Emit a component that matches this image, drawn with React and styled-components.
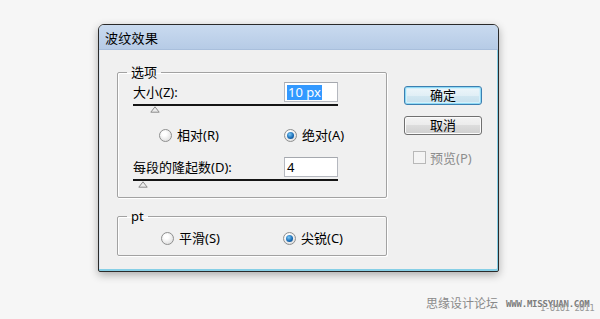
import React from "react";
import styled, { createGlobalStyle, css } from "styled-components";

const Global = createGlobalStyle`
  html, body {
    margin: 0;
    padding: 0;
    background: #f6f6f6;
  }
  body {
    font-family: "Noto Sans", "Noto Sans CJK SC", sans-serif;
    font-size: 13px;
    color: #000;
  }
`;

const Page = styled.div`
  width: 600px;
  height: 319px;
  box-sizing: border-box;
  padding: 24px 0 0 98px;
  display: flex;
  flex-direction: column;
  overflow: hidden;
`;

const Dialog = styled.div`
  width: 401px;
  height: 248px;
  box-sizing: border-box;
  border: 1px solid #2a2a2a;
  border-radius: 6px 6px 2px 2px;
  background: #f0f0f0;
  box-shadow: 0 3px 9px rgba(0, 0, 0, 0.3), inset -1px -2px 0 #86cfe6,
    inset 1px 0 0 #dce6f1;
  display: flex;
  flex-direction: column;
  overflow: hidden;
`;

const TitleBar = styled.div`
  height: 24px;
  flex: none;
  display: flex;
  align-items: center;
  padding-left: 6px;
  background: linear-gradient(180deg, #c9daef 0%, #b6cbe6 100%);
  border-bottom: 1px solid #a9bfdc;
  font-size: 13px;
  letter-spacing: 0.3px;
`;

const Body = styled.div`
  flex: 1;
  display: flex;
  padding: 15px 0 0 18px;
  gap: 17px;
`;

const LeftCol = styled.div`
  width: 270px;
  display: flex;
  flex-direction: column;
  gap: 11px;
`;

const Group = styled.fieldset`
  margin: 0;
  padding: 3px 0 ${(p) => p.$pb}px 15px;
  border: 1px solid #a2a2a2;
  border-radius: 2px;
  box-shadow: inset 1px 1px 0 #fff, 1px 1px 0 #fff;
  min-width: 0;
`;

const Legend = styled.legend`
  padding: 0 4px;
  margin-left: -6px;
  font-size: 13px;
  line-height: 14px;
`;

const FieldRow = styled.div`
  width: 205px;
  height: 20px;
  display: flex;
  align-items: center;
  justify-content: space-between;
`;

const Label = styled.span`
  line-height: 14px;
`;

const Input = styled.div`
  width: 54px;
  height: 20px;
  box-sizing: border-box;
  border: 1px solid #b5b8bf;
  border-top-color: #a5a8ae;
  background: #fff;
  display: flex;
  align-items: center;
  padding-left: 2px;
  font-size: 13px;
`;

const Selected = styled.span`
  background: #3399ff;
  color: #fff;
  line-height: 15px;
  padding: 0 1px;
`;

const Slider = styled.div`
  position: relative;
  width: 205px;
  height: 8px;
  margin-top: 2px;
  &::before {
    content: "";
    display: block;
    height: 2px;
    background: #151515;
  }
`;

const Thumb = styled.svg`
  position: absolute;
  top: 2px;
  left: ${(p) => p.$at}px;
`;

const RadioRow = styled.div`
  display: grid;
  grid-template-columns: ${(p) => p.$cols};
  height: 16px;
  align-items: center;
  margin-top: ${(p) => p.$mt}px;
`;

const Option = styled.label`
  display: flex;
  align-items: center;
  gap: 5px;
  line-height: 14px;
`;

const RadioDot = styled.span`
  position: relative;
  width: 11px;
  height: 11px;
  border-radius: 50%;
  border: 1px solid #8e8f8f;
  background: radial-gradient(circle at 40% 35%, #ffffff 20%, #d4d4d4 100%);
  ${(p) =>
    p.$checked &&
    css`
      &::after {
        content: "";
        position: absolute;
        inset: 2px;
        border-radius: 50%;
        background: radial-gradient(
          circle at 40% 35%,
          #7cc8f5 0%,
          #1c6fb8 55%,
          #0b3f78 100%
        );
      }
    `}
`;

const SecondRow = styled(FieldRow)`
  margin-top: 14px;
`;

const RightCol = styled.div`
  display: flex;
  flex-direction: column;
  padding-top: 21px;
  gap: 11px;
`;

const Button = styled.button`
  width: 78px;
  height: 19px;
  box-sizing: border-box;
  padding: 0;
  border-radius: 3px;
  font-family: inherit;
  font-size: 13px;
  line-height: 15px;
  color: #000;
  border: 1px solid #707070;
  background: linear-gradient(
    180deg,
    #f3f3f3 0%,
    #ebebeb 50%,
    #dcdcdc 50%,
    #cfcfcf 100%
  );
  box-shadow: inset 0 0 0 1px #fbfbfb;
  ${(p) =>
    p.$primary &&
    css`
      border-color: #3c7fb1;
      background: linear-gradient(
        180deg,
        #eef6fa 0%,
        #e1eff6 50%,
        #d2e7f1 50%,
        #c6dfec 100%
      );
      box-shadow: inset 0 0 0 1px #8fdaf5, inset 0 0 0 2px #d4f0fb;
    `}
`;

const CheckRow = styled.label`
  display: flex;
  align-items: center;
  gap: 4px;
  height: 16px;
  margin-top: 3px;
  padding-left: 9px;
  color: #8d8d8d;
`;

const CheckBox = styled.span`
  width: 11px;
  height: 11px;
  border: 1px solid #b8b8b8;
  background: #f4f4f4;
`;

const Footer = styled.div`
  position: relative;
  display: flex;
  align-items: center;
  gap: 8px;
  margin: 24px 0 0 328px;
  color: #8a8a8a;
  white-space: nowrap;
`;

const Brand = styled.span`
  font-size: 12px;
  line-height: 15px;
`;

const Url = styled.span`
  font-family: "DejaVu Sans Mono", monospace;
  font-size: 9px;
  font-weight: bold;
  letter-spacing: -0.2px;
  color: #7d7d7d;
`;

const Stamp = styled.span`
  position: absolute;
  left: 114px;
  top: 7px;
  font-family: "DejaVu Sans Mono", monospace;
  font-size: 9px;
  line-height: 10px;
  color: #9a9a9a;
  letter-spacing: -0.5px;
`;

const ThumbIcon = ({ at }) => (
  <Thumb $at={at} width="10" height="7" viewBox="0 0 10 7">
    <polygon
      points="5,0.8 9.2,6.2 0.8,6.2"
      fill="#ececec"
      stroke="#8c8c8c"
      strokeWidth="1"
    />
  </Thumb>
);

const Radio = ({ checked, children }) => (
  <Option>
    <RadioDot $checked={checked} />
    {children}
  </Option>
);

export default function App() {
  return (
    <Page>
      <Global />
      <Dialog>
        <TitleBar>波纹效果</TitleBar>
        <Body>
          <LeftCol>
            <Group $pb={10}>
              <Legend>选项</Legend>
              <FieldRow>
                <Label>大小(Z):</Label>
                <Input>
                  <Selected>10 px</Selected>
                </Input>
              </FieldRow>
              <Slider>
                <ThumbIcon at={17} />
              </Slider>
              <RadioRow $cols="26px 125px 1fr" $mt={15}>
                <span />
                <Radio>相对(R)</Radio>
                <Radio checked>绝对(A)</Radio>
              </RadioRow>
              <SecondRow>
                <Label>每段的隆起数(D):</Label>
                <Input>4</Input>
              </SecondRow>
              <Slider>
                <ThumbIcon at={5} />
              </Slider>
            </Group>
            <Group $pb={9}>
              <Legend>pt</Legend>
              <RadioRow $cols="28px 122px 1fr" $mt={4}>
                <span />
                <Radio>平滑(S)</Radio>
                <Radio checked>尖锐(C)</Radio>
              </RadioRow>
            </Group>
          </LeftCol>
          <RightCol>
            <Button $primary>确定</Button>
            <Button>取消</Button>
            <CheckRow>
              <CheckBox />
              预览(P)
            </CheckRow>
          </RightCol>
        </Body>
      </Dialog>
      <Footer>
        <Brand>思缘设计论坛</Brand>
        <Url>WWW.MISSYUAN.COM</Url>
        <Stamp>1-0101 2011</Stamp>
      </Footer>
    </Page>
  );
}
